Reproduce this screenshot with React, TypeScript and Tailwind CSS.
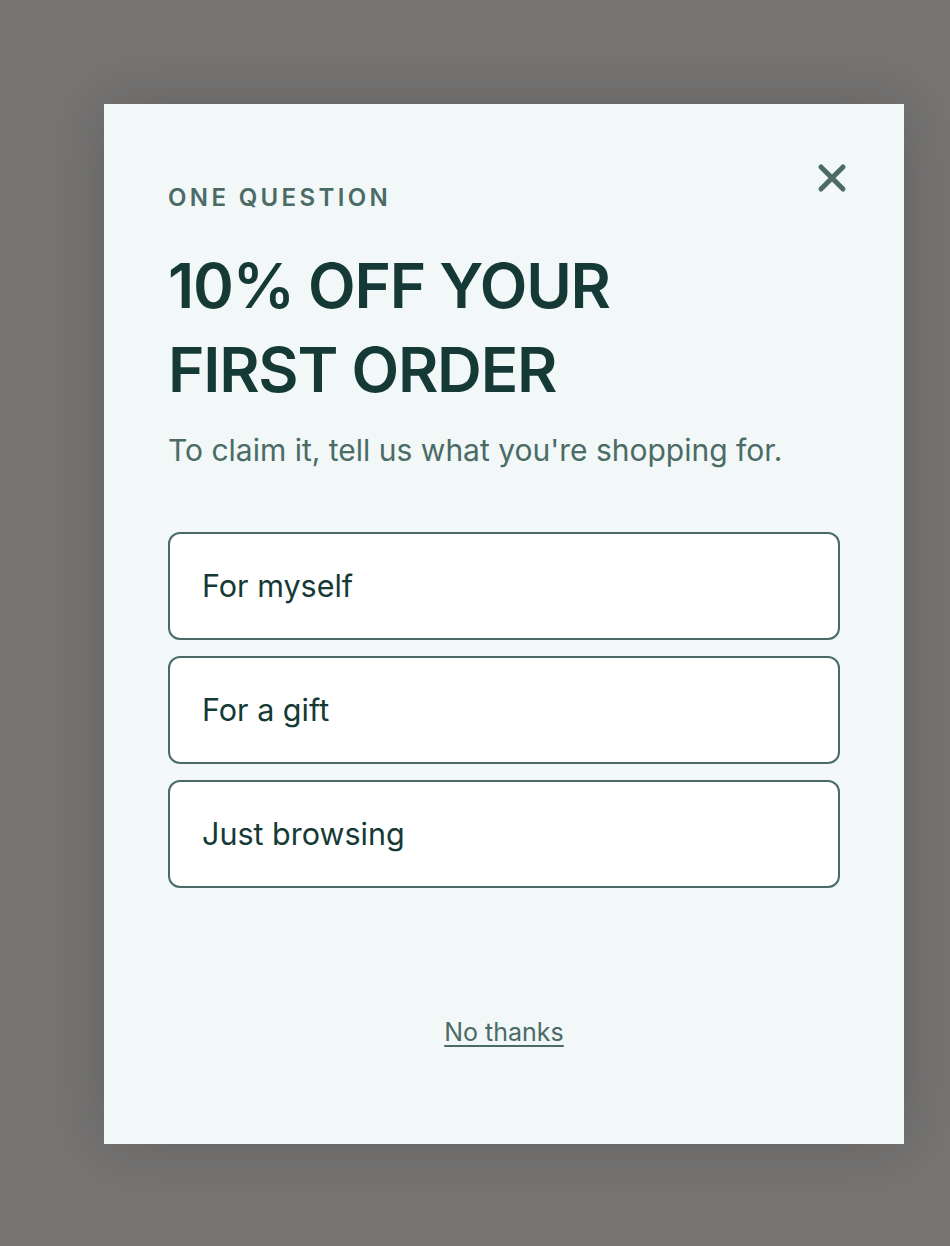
export default function App() {
  const options = ["For myself", "For a gift", "Just browsing"];

  return (
    <main
      className="min-h-[1246px] w-full bg-[#767574] pt-[104px] pl-[104px]"
      style={{ fontFamily: "Inter, 'Noto Sans', sans-serif" }}
    >
      <div className="relative flex h-[1040px] w-[800px] flex-col bg-[#f2f7f7] px-16 pt-[78px] shadow-[0_0_60px_rgba(0,0,0,0.18)]">
        <button
          type="button"
          aria-label="Close"
          className="absolute right-[56px] top-[58px] flex h-8 w-8 items-center justify-center text-[#4a6b66]"
        >
          <svg width="30" height="30" viewBox="0 0 30 30" fill="none">
            <path
              d="M4 4L26 26M26 4L4 26"
              stroke="currentColor"
              strokeWidth="5"
              strokeLinecap="round"
            />
          </svg>
        </button>

        <p className="text-[24px] font-semibold uppercase leading-[32px] tracking-[0.14em] text-[#4a6b66]">
          One question
        </p>
        <h1 className="mt-[30px] text-[62px] font-semibold leading-[84px] tracking-[-0.02em] text-[#153a36]">
          10% OFF YOUR
          <br />
          FIRST ORDER
        </h1>
        <p className="mt-[16px] text-[30px] leading-[44px] text-[#4a6b66]">
          To claim it, tell us what you're shopping for.
        </p>

        <div className="mt-[60px] flex flex-col gap-4">
          {options.map((o) => (
            <button
              key={o}
              type="button"
              className="flex h-[108px] w-full items-center rounded-xl border-2 border-[#4a6b66] bg-white px-[32px] text-left text-[30.5px] text-[#153a36]"
            >
              {o}
            </button>
          ))}
        </div>

        <div className="mt-[128px] flex justify-center">
          <a
            href="#"
            className="text-[25px] leading-[32px] text-[#4a6b66] underline underline-offset-[4px] decoration-2"
          >
            No thanks
          </a>
        </div>
      </div>
    </main>
  );
}
